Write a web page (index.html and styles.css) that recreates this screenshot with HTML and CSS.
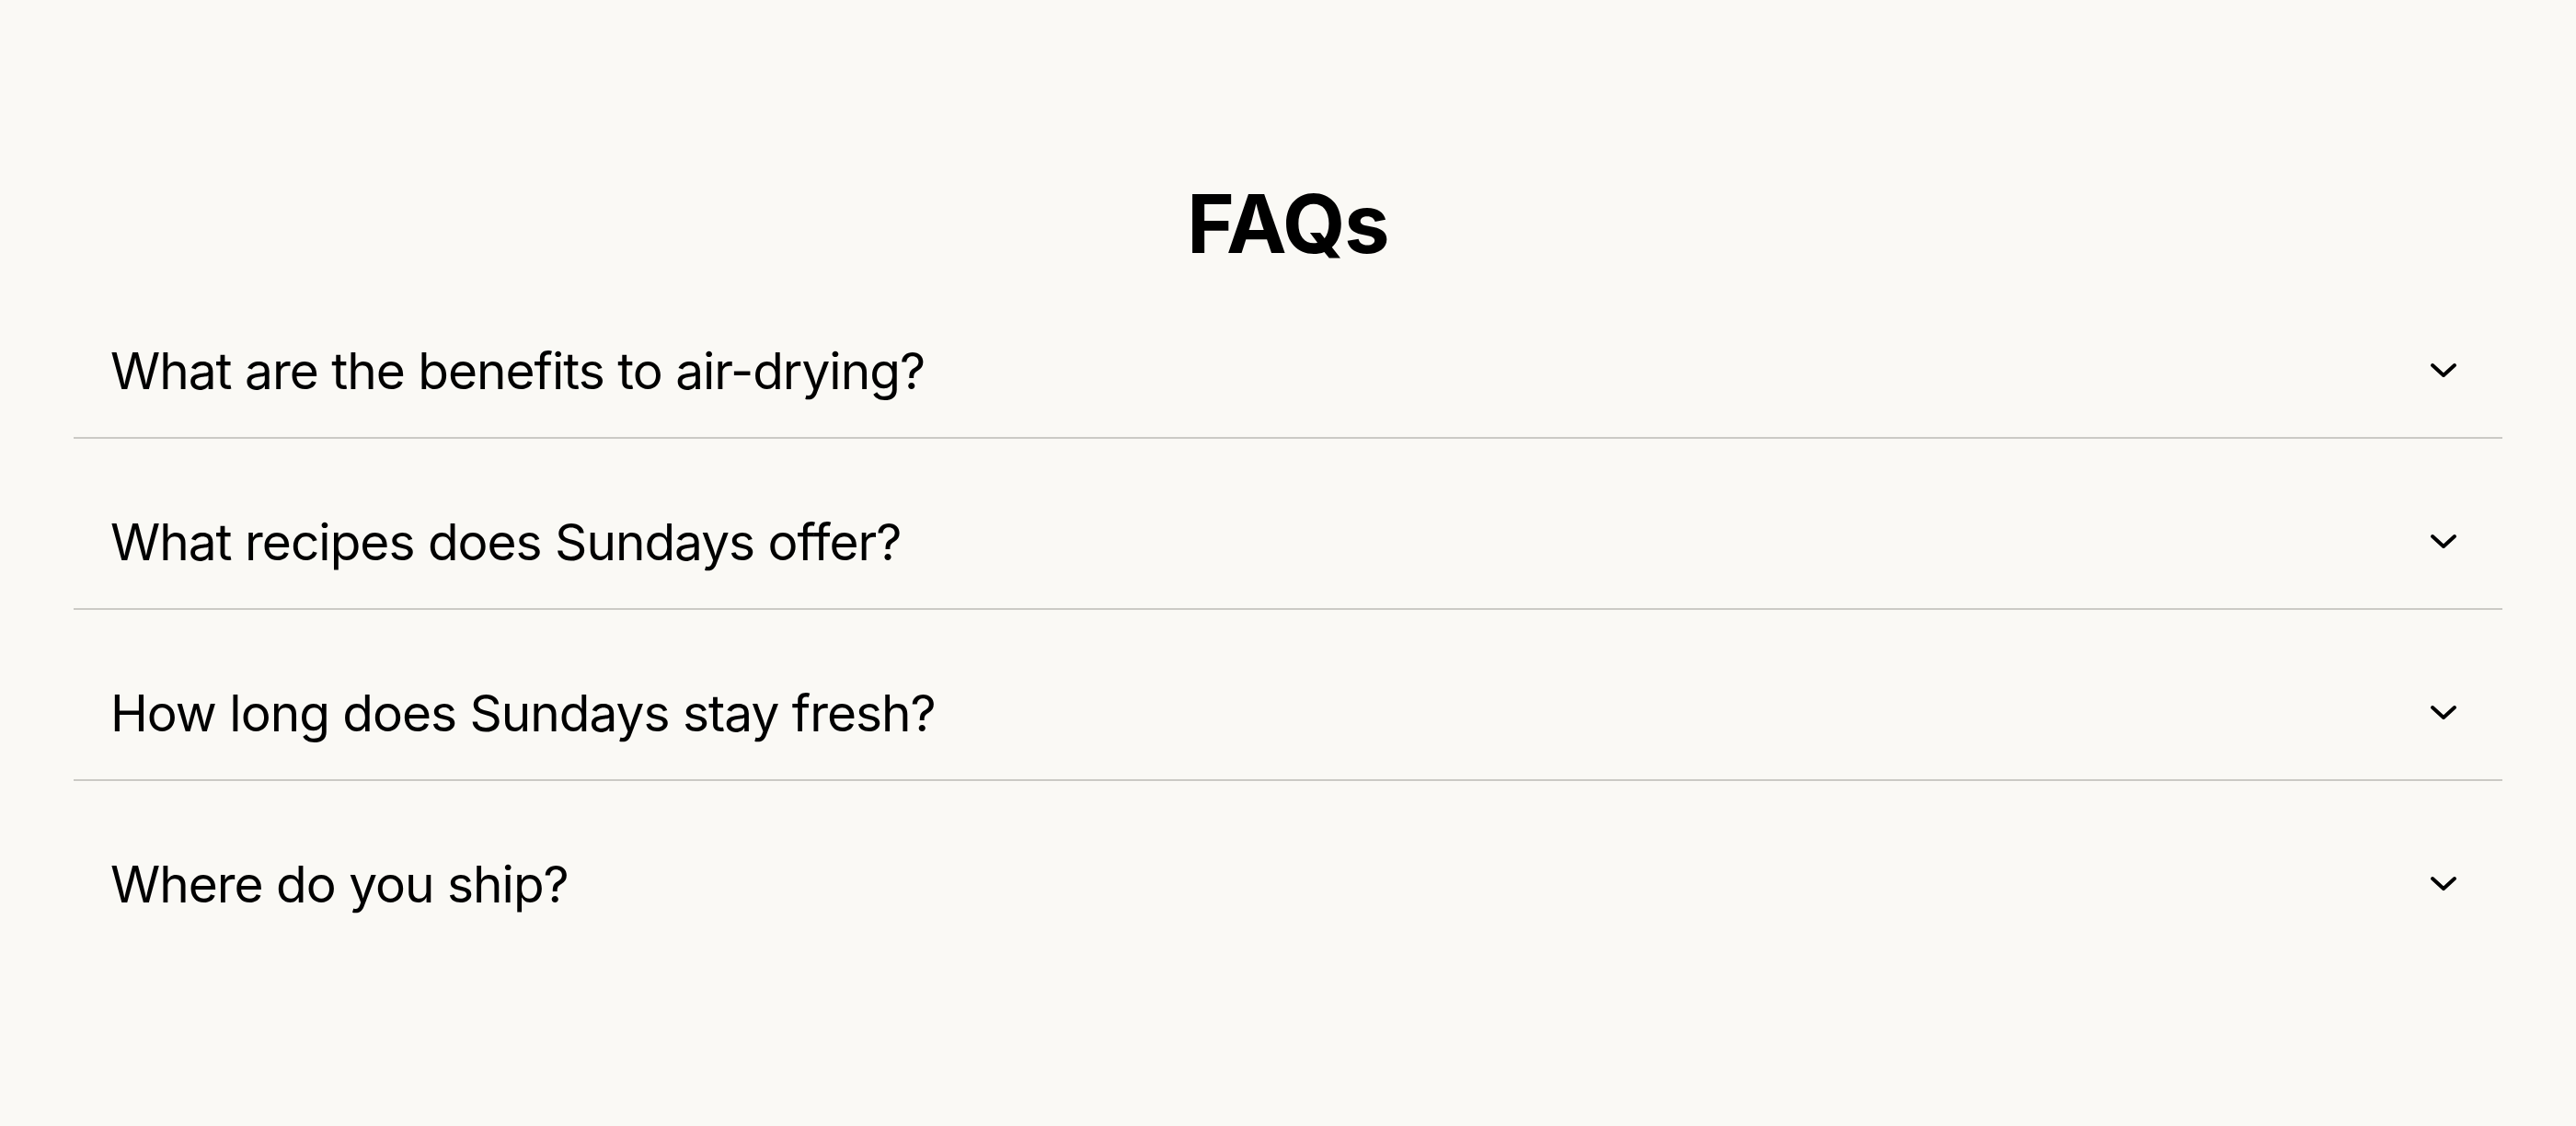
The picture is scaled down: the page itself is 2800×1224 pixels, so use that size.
FILE: index.html
```html
<!DOCTYPE html>
<html lang="en">
<head>
<meta charset="utf-8">
<title>FAQs</title>
<link rel="stylesheet" href="styles.css">
</head>
<body>
<section class="faq">
  <h2 class="faq-title">FAQs</h2>
  <div class="faq-list">
    <div class="faq-item">
      <span class="faq-q">What are the benefits to air-drying?</span>
      <svg class="chev" width="32" height="20" viewBox="0 0 32 20"><polyline points="4,4 16,15 28,4" fill="none" stroke="#000" stroke-width="4" stroke-linecap="round" stroke-linejoin="round"/></svg>
    </div>
    <div class="faq-item">
      <span class="faq-q">What recipes does Sundays offer?</span>
      <svg class="chev" width="32" height="20" viewBox="0 0 32 20"><polyline points="4,4 16,15 28,4" fill="none" stroke="#000" stroke-width="4" stroke-linecap="round" stroke-linejoin="round"/></svg>
    </div>
    <div class="faq-item">
      <span class="faq-q">How long does Sundays stay fresh?</span>
      <svg class="chev" width="32" height="20" viewBox="0 0 32 20"><polyline points="4,4 16,15 28,4" fill="none" stroke="#000" stroke-width="4" stroke-linecap="round" stroke-linejoin="round"/></svg>
    </div>
    <div class="faq-item last">
      <span class="faq-q">Where do you ship?</span>
      <svg class="chev" width="32" height="20" viewBox="0 0 32 20"><polyline points="4,4 16,15 28,4" fill="none" stroke="#000" stroke-width="4" stroke-linecap="round" stroke-linejoin="round"/></svg>
    </div>
  </div>
</section>
</body>
</html>
```
FILE: styles.css
```css
html, body {
  margin: 0;
  padding: 0;
  background: #faf9f5;
  color: #000;
  font-family: "Inter", "Open Sans", sans-serif;
}
.faq {
  padding: 196px 80px 0;
}
.faq-title {
  margin: 0;
  text-align: center;
  font-size: 88px;
  line-height: 95px;
  font-weight: 700;
  letter-spacing: -1px;
}
.faq-list {
  display: flex;
  flex-direction: column;
}
.faq-item {
  display: flex;
  align-items: center;
  justify-content: space-between;
  padding: 79px 48px 39px 40px;
  border-bottom: 2px solid #cbcac5;
}
.faq-item.last {
  border-bottom: none;
}
.faq-q {
  font-size: 55px;
  line-height: 66px;
  font-weight: 400;
  letter-spacing: -1px;
}
.chev {
  display: block;
}
```
